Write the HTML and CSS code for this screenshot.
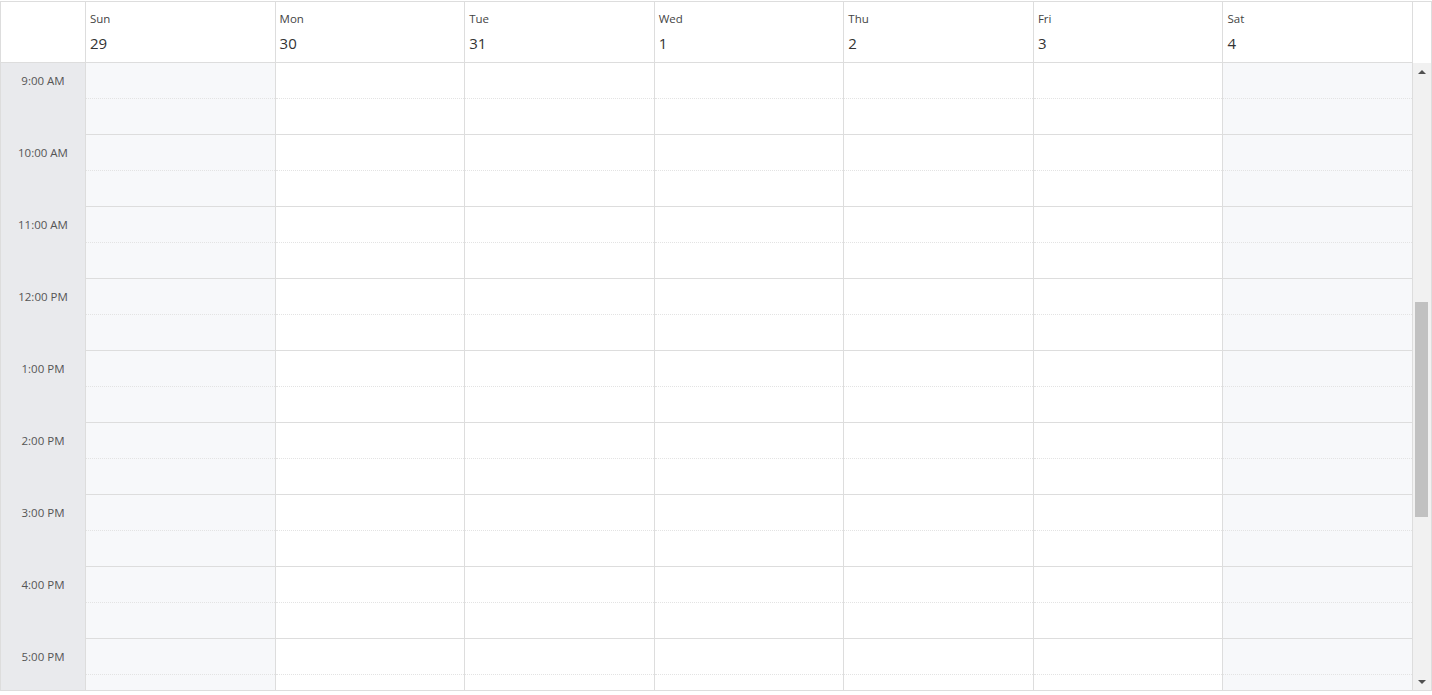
FILE: index.html
```html
<!DOCTYPE html>
<html lang="en">
<head>
    <meta charset="UTF-8">
    <meta name="viewport" content="width=device-width, initial-scale=1.0">
    <title>Week View</title>
    <link rel="stylesheet" href="styles.css">
</head>
<body>
    <div class="scheduler">
        <div class="week-header">
            <div class="corner"></div>
            <div class="day-head"><span class="day-name">Sun</span><span class="day-num">29</span></div>
            <div class="day-head"><span class="day-name">Mon</span><span class="day-num">30</span></div>
            <div class="day-head"><span class="day-name">Tue</span><span class="day-num">31</span></div>
            <div class="day-head"><span class="day-name">Wed</span><span class="day-num">1</span></div>
            <div class="day-head"><span class="day-name">Thu</span><span class="day-num">2</span></div>
            <div class="day-head"><span class="day-name">Fri</span><span class="day-num">3</span></div>
            <div class="day-head"><span class="day-name">Sat</span><span class="day-num">4</span></div>
            <div class="gutter"></div>
        </div>
        <div class="week-body">
            <div class="grid">
                <div class="time-col" id="timeCol"></div>
                <div class="day-col weekend"></div>
                <div class="day-col"></div>
                <div class="day-col"></div>
                <div class="day-col"></div>
                <div class="day-col"></div>
                <div class="day-col"></div>
                <div class="day-col weekend"></div>
            </div>
            <div class="scrollbar">
                <div class="sb-btn"><span class="arrow up"></span></div>
                <div class="sb-track"><div class="sb-thumb"></div></div>
                <div class="sb-btn"><span class="arrow down"></span></div>
            </div>
        </div>
    </div>

    <script>
        // working hours shown in the view: 9 AM .. 5 PM
        const firstHour = 9, lastHour = 17;
        const timeCol = document.getElementById('timeCol');
        for (let h = firstHour; h <= lastHour; h++) {
            const label = document.createElement('div');
            label.className = 'time-label';
            const hour = h % 12 === 0 ? 12 : h % 12;
            label.textContent = hour + ':00 ' + (h < 12 ? 'AM' : 'PM');
            timeCol.appendChild(label);
        }

        const slots = (lastHour - firstHour + 1) * 2;
        document.querySelectorAll('.day-col').forEach(col => {
            for (let s = 0; s < slots; s++) {
                const slot = document.createElement('div');
                slot.className = s % 2 === 0 ? 'slot half' : 'slot';
                col.appendChild(slot);
            }
        });
    </script>
</body>
</html>
```

FILE: styles.css
```css
body {
    margin: 0;
    font-family: "Open Sans", "Noto Sans", Arial, sans-serif;
    color: #333;
    background: #fff;
}
.scheduler {
    margin-top: 1px;
    height: 690px;
    box-sizing: border-box;
    border: 1px solid #ddd;
    display: flex;
    flex-direction: column;
}
.week-header {
    display: flex;
    height: 61px;
    flex-shrink: 0;
}
.corner {
    width: 85px;
    box-sizing: border-box;
    border-right: 1px solid #ddd;
    border-bottom: 1px solid #ddd;
    flex-shrink: 0;
}
.day-head {
    flex: 1;
    display: flex;
    flex-direction: column;
    padding: 9px 0 0 4px;
    box-sizing: border-box;
    border-right: 1px solid #ddd;
    border-bottom: 1px solid #ddd;
}
.day-name {
    font-size: 11.5px;
    line-height: 16px;
    color: #444;
}
.day-num {
    font-size: 15px;
    line-height: 24px;
    margin-top: 4px;
    color: #333;
}
.gutter {
    width: 18px;
    flex-shrink: 0;
}
.week-body {
    flex: 1;
    display: flex;
    min-height: 0;
}
.grid {
    flex: 1;
    display: flex;
    overflow: hidden;
}
.time-col {
    width: 85px;
    flex-shrink: 0;
    box-sizing: border-box;
    background: #e9eaed;
    border-right: 1px solid #ddd;
}
.time-label {
    height: 72px;
    line-height: 36px;
    text-align: center;
    font-size: 11.5px;
    color: #555;
}
.day-col {
    flex: 1;
    box-sizing: border-box;
    border-right: 1px solid #ddd;
}
.day-col.weekend {
    background: #f7f8fa;
}
.slot {
    height: 36px;
    box-sizing: border-box;
    border-bottom: 1px solid #ddd;
}
.slot.half {
    border-bottom: 1px dotted #e3e3e3;
}

/* scrollbar drawn beside the grid */
.scrollbar {
    width: 18px;
    flex-shrink: 0;
    display: flex;
    flex-direction: column;
    background: #f1f1f1;
}
.sb-btn {
    height: 17px;
    display: flex;
    align-items: center;
    justify-content: center;
    flex-shrink: 0;
}
.arrow {
    width: 0;
    height: 0;
    border-left: 4px solid transparent;
    border-right: 4px solid transparent;
}
.arrow.up {
    border-bottom: 4px solid #505050;
}
.arrow.down {
    border-top: 4px solid #505050;
}
.sb-track {
    flex: 1;
    padding: 222px 3px 0 2px;
}
.sb-thumb {
    height: 215px;
    background: #c1c1c1;
}
```
